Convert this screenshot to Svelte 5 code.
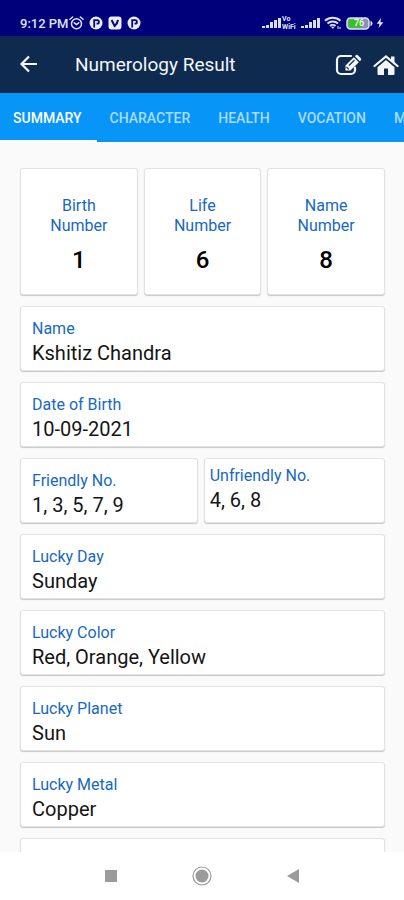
<script>
  const tabs = ['Summary', 'Character', 'Health', 'Vocation', 'M'];
  let active = $state(0);

  const numbers = [
    { first: 'Birth', value: 1 },
    { first: 'Life', value: 6 },
    { first: 'Name', value: 8 },
  ];

  const rows = [
    [{ label: 'Name', value: 'Kshitiz Chandra' }],
    [{ label: 'Date of Birth', value: '10-09-2021' }],
    [
      { label: 'Friendly No.', value: '1, 3, 5, 7, 9' },
      { label: 'Unfriendly No.', value: '4, 6, 8', tight: true },
    ],
    [{ label: 'Lucky Day', value: 'Sunday' }],
    [{ label: 'Lucky Color', value: 'Red, Orange, Yellow' }],
    [{ label: 'Lucky Planet', value: 'Sun' }],
    [{ label: 'Lucky Metal', value: 'Copper' }],
    [{ label: '', value: '' }],
  ];
</script>

{#snippet signal()}
  <svg width="19" height="12" viewBox="0 0 19 12" fill="#d9dcf5">
    <rect x="0" y="9" width="3" height="2" />
    <rect x="4" y="8" width="3" height="3" />
    <rect x="8" y="5" width="3" height="6" />
    <rect x="12" y="3" width="3" height="8" />
    <rect x="16" y="1" width="3" height="10" />
  </svg>
{/snippet}

{#snippet parking()}
  <svg width="14" height="14" viewBox="0 0 14 14">
    <circle cx="7" cy="7" r="6.5" fill="#e9eafa" />
    <path d="M5.2 11.500V4.200h3a1.700 1.700 0 0 1 0 3.400H7.500" fill="none" stroke="#06067a" stroke-width="1.800" />
  </svg>
{/snippet}

<div class="screen">
  <div class="status">
    <span class="time">9:12 PM</span>
    <div class="notices">
      <svg width="15" height="14" viewBox="0 0 15 14" fill="none" stroke="#dfe1f7" stroke-width="1.5" stroke-linecap="round">
        <circle cx="7.5" cy="7.7" r="5" />
        <path d="M1 3.2 3.6 1M14 3.2 11.4 1M5.3 6.8l2.2 1.8 2.2-1.8" />
      </svg>
      {@render parking()}
      <svg width="14" height="14" viewBox="0 0 14 14">
        <rect x="0.5" y="0.5" width="13" height="13" rx="3" fill="#e9eafa" />
        <path d="m3.6 4 3 6c1.800-1.600 3-3.500 3.400-6" fill="none" stroke="#06067a" stroke-width="2" />
      </svg>
      {@render parking()}
    </div>
    <div class="system">
      {@render signal()}
      <span class="vowifi"><span>Vo</span><span>WiFi</span></span>
      {@render signal()}
      <svg class="wifi" width="18" height="14" viewBox="0 0 18 14" fill="none" stroke="#dfe1f7" stroke-width="2">
        <path d="M1 4.800a11.500 11.500 0 0 1 15.500 0M3.500 7.600a7.700 7.700 0 0 1 10.500 0M6 10a4 4 0 0 1 5.500 0" />
        <path d="M7 10.800 8.800 13l1.800-2.200z" fill="#dfe1f7" stroke="none" />
        <path d="M14 10v3M16 11v2" stroke-width="1" />
      </svg>
      <span class="battery">
        <svg width="27" height="13" viewBox="0 0 27 13">
          <rect x="1" y="1" width="22" height="11" rx="3.500" fill="#8a93a8" stroke="#dfe1f7" stroke-width="1.500" />
          <path d="M4 2.500h12v8H4a2 2 0 0 1-1.500-2v-4a2 2 0 0 1 1.500-2z" fill="#35c41c" />
          <path d="M24.500 3.800q2 .5 2 2.700t-2 2.700z" fill="#dfe1f7" />
        </svg>
        <span class="charge">76</span>
      </span>
      <svg width="8" height="12" viewBox="0 0 8 12" fill="#e9eafa"><path d="M5 1 .8 6.800h2.700L2.600 11 7.300 5.200H4.400z" /></svg>
    </div>
  </div>

  <header class="bar">
    <button class="back" aria-label="Back">
      <svg width="20" height="20" viewBox="0 0 20 20" fill="none" stroke="#f4f6fa" stroke-width="2.200">
        <path d="M18 9H3M10 1.500 2.500 9l7.500 7.500" />
      </svg>
    </button>
    <h1>Numerology Result</h1>
    <button aria-label="Edit">
      <svg width="28" height="24" viewBox="0 0 28 24">
        <path d="M17 3H7a4 4 0 0 0-4 4v10a4 4 0 0 0 4 4h10a4 4 0 0 0 4-4v-2.500" fill="none" stroke="#f4f6fa" stroke-width="2.200" stroke-linecap="round" />
        <path d="M11.500 17.500v-5L19.800 4.200l5 5L16.500 17.500z" fill="#f4f6fa" />
        <path d="m20.800 3.200 1.200-1.200q.8-.6 1.600 0l3.400 3.400q.6.800 0 1.600l-1.200 1.200z" fill="#f4f6fa" />
        <path d="m15 12.500 5.500-5.500M12.500 14l2.300 2.300" stroke="#0e2a4e" stroke-width="1.100" />
      </svg>
    </button>
    <button aria-label="Home">
      <svg width="26" height="24" viewBox="0 0 26 24" fill="#f4f6fa">
        <path d="M13 7 4.500 14.200V21q0 1 1 1H11v-6.500h4V22h5.500q1 0 1-1v-6.800z" />
        <path d="M1.500 13 13 3.500 24.500 13" fill="none" stroke="#f4f6fa" stroke-width="2.200" stroke-linecap="round" />
        <path d="M18 3.500h3.500v7L18 7.500z" />
      </svg>
    </button>
  </header>

  <nav class="tabs">
    {#each tabs as tab, i}
      <button class:active={active === i} onclick={() => (active = i)}>{tab}</button>
    {/each}
  </nav>

  <main>
    <div class="row triple">
      {#each numbers as n}
        <section class="card number">
          <h2>{n.first}<br />Number</h2>
          <strong>{n.value}</strong>
        </section>
      {/each}
    </div>
    {#each rows as row}
      <div class="row" class:pair={row.length === 2}>
        {#each row as item}
          <section class="card" class:tight={item.tight}>
            <h2>{item.label}</h2>
            <p>{item.value}</p>
          </section>
        {/each}
      </div>
    {/each}
  </main>

  <footer>
    <button aria-label="Recent apps">
      <svg width="20" height="20" viewBox="0 0 20 20"><rect x="4" y="4" width="12" height="12" fill="#9b9b9b" /></svg>
    </button>
    <button aria-label="Home screen">
      <svg width="20" height="20" viewBox="0 0 20 20">
        <circle cx="10" cy="10" r="9" fill="none" stroke="#9b9b9b" stroke-width="1.200" />
        <circle cx="10" cy="10" r="6.500" fill="#9b9b9b" />
      </svg>
    </button>
    <button aria-label="Go back">
      <svg width="20" height="20" viewBox="0 0 20 20"><path d="M4 10 16 3v14z" fill="#9b9b9b" /></svg>
    </button>
  </footer>
</div>

<style>
  :global(body) {
    margin: 0;
  }
  .screen {
    display: flex;
    flex-direction: column;
    height: 100vh;
    overflow: hidden;
    background: #fafafa;
    font-family: Roboto, 'Noto Sans', sans-serif;
  }
  button {
    display: flex;
    align-items: center;
    justify-content: center;
    padding: 0;
    border: 0;
    background: none;
    font: inherit;
    cursor: pointer;
  }
  svg {
    display: block;
    flex: none;
  }
  h1,
  h2,
  p {
    margin: 0;
    font-weight: 400;
  }
  .status {
    display: flex;
    align-items: center;
    flex: none;
    box-sizing: border-box;
    height: 36px;
    padding: 10px 20px 0;
    background: #00007a;
    color: #dfe1f7;
  }
  .time {
    font-size: 13px;
    font-weight: 500;
    white-space: nowrap;
  }
  .notices {
    display: flex;
    align-items: center;
    gap: 5px;
  }
  .system {
    display: flex;
    align-items: center;
    gap: 1px;
    margin-left: auto;
  }
  .vowifi {
    display: flex;
    flex-direction: column;
    width: 18px;
    font-size: 7px;
    font-weight: 700;
    line-height: 8px;
  }
  .wifi {
    margin: 0 3px;
  }
  .battery {
    display: grid;
    align-items: center;
    margin-right: 2px;
  }
  .battery > * {
    grid-area: 1 / 1;
  }
  .charge {
    padding-left: 8px;
    color: #fff;
    font-size: 9px;
    font-weight: 500;
    line-height: 13px;
  }
  .bar {
    display: flex;
    align-items: center;
    flex: none;
    gap: 11px;
    height: 57px;
    padding: 0 5px 0 19px;
    background: #0e2a4e;
  }
  h1 {
    flex: 1;
    padding-left: 25px;
    color: #f4f6fa;
    font-size: 19px;
    line-height: 24px;
  }
  .tabs {
    display: flex;
    flex: none;
    height: 49px;
    overflow: hidden;
    background: #0795f7;
  }
  .tabs button {
    box-sizing: border-box;
    flex: none;
    padding: 3px 15px 0 13px;
    border-bottom: 2px solid transparent;
    color: #a9dcfd;
    font-size: 14px;
    font-weight: 500;
    text-transform: uppercase;
  }
  .tabs .active {
    border-color: #fafafa;
    color: #fff;
  }
  main {
    display: flex;
    flex: 1;
    flex-direction: column;
    gap: 11px;
    min-height: 0;
    overflow: hidden;
    padding: 26px 19px 0 20px;
  }
  .row {
    display: grid;
    flex: none;
    gap: 6px;
  }
  .triple {
    grid-template-columns: repeat(3, 1fr);
  }
  .pair {
    grid-template-columns: 49fr 50fr;
  }
  .card {
    box-sizing: border-box;
    min-height: 65px;
    padding: 12px 11px 3px;
    border: 1px solid #e2e2e2;
    border-radius: 3px;
    background: #fff;
    box-shadow: 0 1px 1px #c8c8c8;
  }
  h2 {
    color: #1769c0;
    font-size: 16px;
    line-height: 20px;
  }
  p {
    color: #141414;
    font-size: 20px;
    line-height: 28px;
  }
  .tight {
    padding: 7px 5px 8px;
  }
  .number {
    padding: 27px 8px 20px;
    text-align: center;
  }
  .number strong {
    display: block;
    padding-top: 10px;
    color: #000;
    font-size: 24px;
    font-weight: 500;
    line-height: 28px;
  }
  footer {
    display: flex;
    align-items: center;
    justify-content: center;
    flex: none;
    gap: 71px;
    height: 48px;
    background: #fff;
  }
</style>
